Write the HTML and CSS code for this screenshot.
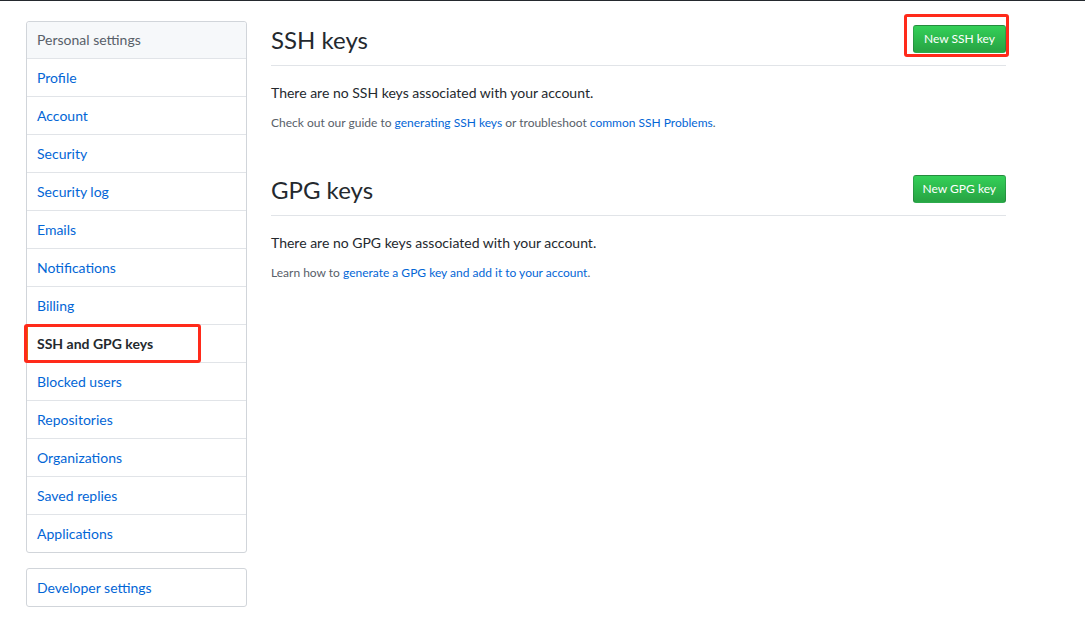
FILE: index.html
```html
<!DOCTYPE html>
<html>
<head>
<meta charset="utf-8">
<link rel="stylesheet" href="styles.css">
</head>
<body>
<div class="page">
  <nav class="sidebar">
    <div class="menu">
      <div class="menu-heading">Personal settings</div>
      <a class="menu-item" href="#">Profile</a>
      <a class="menu-item" href="#">Account</a>
      <a class="menu-item" href="#">Security</a>
      <a class="menu-item" href="#">Security log</a>
      <a class="menu-item" href="#">Emails</a>
      <a class="menu-item" href="#">Notifications</a>
      <a class="menu-item" href="#">Billing</a>
      <a class="menu-item selected" href="#">SSH and GPG keys<span class="mark mark-nav"></span></a>
      <a class="menu-item" href="#">Blocked users</a>
      <a class="menu-item" href="#">Repositories</a>
      <a class="menu-item" href="#">Organizations</a>
      <a class="menu-item" href="#">Saved replies</a>
      <a class="menu-item" href="#">Applications</a>
    </div>
    <div class="menu">
      <a class="menu-item" href="#">Developer settings</a>
    </div>
  </nav>
  <main class="content">
    <section class="keys">
      <div class="subhead">
        <h2 class="subhead-title">SSH keys</h2>
        <span class="btn-wrap"><a class="btn" href="#">New SSH key</a><span class="mark mark-btn"></span></span>
      </div>
      <p class="blank">There are no SSH keys associated with your account.</p>
      <p class="note">Check out our guide to <a href="#">generating SSH keys</a> or troubleshoot <a href="#">common SSH Problems</a>.</p>
    </section>
    <section class="keys keys-gpg">
      <div class="subhead">
        <h2 class="subhead-title">GPG keys</h2>
        <span class="btn-wrap"><a class="btn" href="#">New GPG key</a></span>
      </div>
      <p class="blank">There are no GPG keys associated with your account.</p>
      <p class="note">Learn how to <a href="#">generate a GPG key and add it to your account</a>.</p>
    </section>
  </main>
</div>
</body>
</html>
```
FILE: styles.css
```css
html, body {
  margin: 0;
  padding: 0;
  background: #fff;
}
body {
  font-family: Lato, "Noto Sans", sans-serif;
  font-size: 14px;
  line-height: 1.5;
  color: #24292e;
  border-top: 1px solid #24292e;
}
a {
  color: #0366d6;
  text-decoration: none;
}
.page {
  display: flex;
  gap: 24px;
  padding: 20px 0 0 26px;
}
.sidebar {
  width: 221px;
  flex: none;
  display: flex;
  flex-direction: column;
  gap: 15px;
}
.menu {
  border: 1px solid #d1d5da;
  border-radius: 3px;
  background: #fff;
}
.menu-heading {
  padding: 7px 10px 8px;
  background: #f6f8fa;
  color: #586069;
  border-bottom: 1px solid #e1e4e8;
  border-radius: 3px 3px 0 0;
  line-height: 21px;
}
.menu-item {
  position: relative;
  display: block;
  padding: 8px 10px;
  line-height: 21px;
  border-bottom: 1px solid #e1e4e8;
}
.menu-item:last-child {
  border-bottom: 0;
}
.menu-item.selected {
  color: #24292e;
  font-weight: 700;
}
.menu-item.selected::before {
  content: "";
  position: absolute;
  left: -1px;
  top: 0;
  bottom: 0;
  width: 2px;
  background: #e36209;
}
.mark {
  position: absolute;
  border: 3px solid #ff2a1a;
  border-radius: 3px;
  pointer-events: none;
}
.mark-nav {
  left: -3px;
  top: -1px;
  width: 171px;
  height: 33px;
}
.content {
  width: 735px;
  flex: none;
  padding-top: 1px;
}
.subhead {
  display: flex;
  align-items: flex-start;
  justify-content: space-between;
  padding-bottom: 7px;
  border-bottom: 1px solid #e1e4e8;
}
.subhead-title {
  margin: 0;
  font-size: 24px;
  font-weight: 400;
  line-height: 36px;
}
.btn-wrap {
  position: relative;
  display: inline-block;
  margin-top: 3px;
}
.btn {
  display: inline-block;
  padding: 3px 9px;
  font-size: 12px;
  line-height: 20px;
  color: #fff;
  border: 1px solid rgba(27, 31, 35, 0.2);
  border-radius: 3px;
  background: linear-gradient(#34d058, #28a745 90%);
  min-width: 73px;
  text-align: center;
  vertical-align: top;
}
.mark-btn {
  left: -9px;
  top: -11px;
  width: 99px;
  height: 37px;
}
.blank {
  margin: 16px 0 0;
  line-height: 21px;
}
.note {
  margin: 11px 0 0;
  font-size: 12px;
  line-height: 18px;
  color: #586069;
}
.keys-gpg {
  margin-top: 40px;
}
```
